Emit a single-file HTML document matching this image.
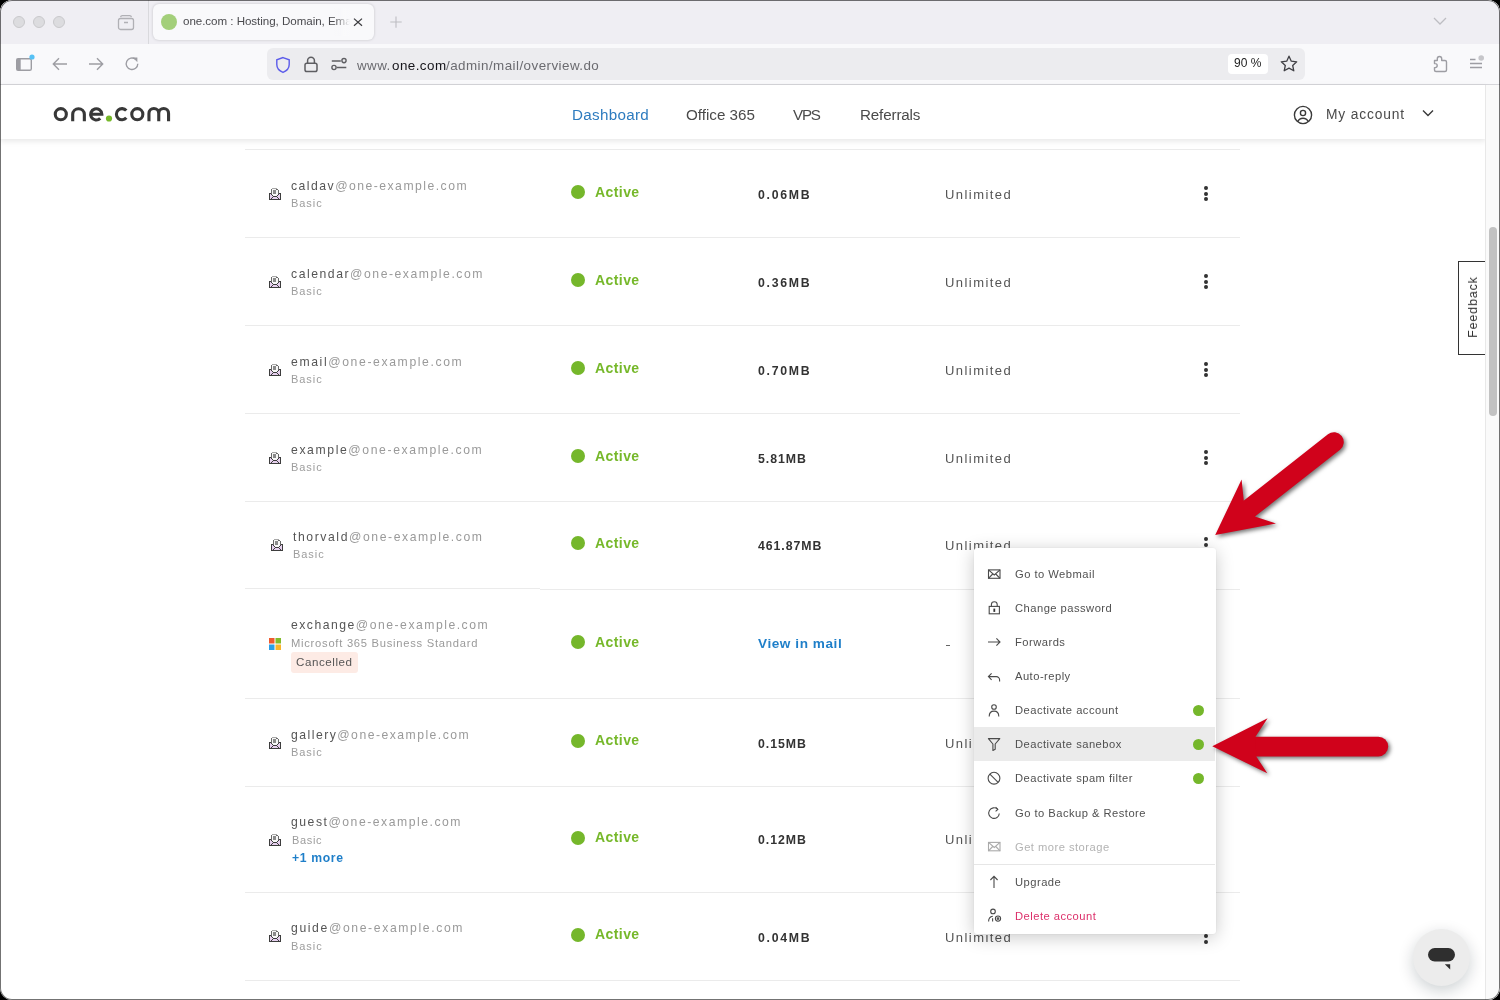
<!DOCTYPE html><html><head><meta charset="utf-8"><style>
*{margin:0;padding:0;box-sizing:border-box}
html,body{width:1500px;height:1000px;overflow:hidden;background:#000;font-family:"Liberation Sans",sans-serif}
.win{position:absolute;left:0;top:0;width:1500px;height:1000px;border-radius:12px;overflow:hidden;background:#fff}
.frame{position:absolute;left:0;top:0;width:1500px;height:1000px;border-radius:12px;box-shadow:inset 0 0 0 1px rgba(0,0,0,.55);z-index:50}
.t{position:absolute;white-space:pre;line-height:0;will-change:transform}
.abs{position:absolute}
.tabbar{position:absolute;left:0;top:0;width:1500px;height:44px;background:#efeef3}
.toolbar{position:absolute;left:0;top:44px;width:1500px;height:41px;background:#f9f9fb;border-bottom:1px solid #d6d6da}
.hdr{position:absolute;left:0;top:85px;width:1486px;height:54px;background:#fff;box-shadow:0 2px 6px rgba(0,0,0,.10);z-index:3}
.line{position:absolute;left:245px;width:995px;height:1px;background:#ebebeb}
.dot{position:absolute;width:14px;height:14px;border-radius:50%;background:#75b72b}
.kebab{position:absolute;width:3.8px;height:3.8px;border-radius:50%;background:#333}
.menu{position:absolute;left:974px;top:548px;width:242px;height:386px;background:#fff;border-radius:3px;box-shadow:0 3px 18px rgba(0,0,0,.22),0 0 2px rgba(0,0,0,.08);z-index:5}
.gdot{position:absolute;width:11px;height:11px;border-radius:50%;background:#75b72b}
</style></head><body><div class="win">
<div class="tabbar"></div>
<div class="abs" style="left:13px;top:16px;width:12px;height:12px;border-radius:50%;background:#dcdcdf;border:1px solid #c9c9cc"></div>
<div class="abs" style="left:33px;top:16px;width:12px;height:12px;border-radius:50%;background:#dcdcdf;border:1px solid #c9c9cc"></div>
<div class="abs" style="left:53px;top:16px;width:12px;height:12px;border-radius:50%;background:#dcdcdf;border:1px solid #c9c9cc"></div>
<svg class="abs" style="left:117px;top:13px" width="18" height="18" viewBox="0 0 18 18"><g fill="none" stroke="#b0b0b5" stroke-width="1.3"><rect x="1.5" y="5.5" width="15" height="11" rx="2"/><path d="M3.6 4.2a1.8 1.8 0 0 1 1.8-1.5h7.2a1.8 1.8 0 0 1 1.8 1.5"/><path d="M7 9.5h4"/></g></svg>
<div class="abs" style="left:148px;top:0;width:1px;height:44px;background:#d9d9dd"></div>
<div class="abs" style="left:153px;top:4px;width:221px;height:36px;background:#f9f9fb;border-radius:6px;box-shadow:0 0 3px rgba(0,0,0,.18)"></div>
<div class="abs" style="left:161px;top:14px;width:16px;height:16px;border-radius:50%;background:#a3cf7a"></div>
<div class="t" style="left:182.50px;top:21.18px;font-size:11.6px;font-weight:400;color:#4a4a4e;letter-spacing:-0.05px;">one.com : Hosting, Domain, Ema</div>
<div class="abs" style="left:334px;top:8px;width:20px;height:28px;background:linear-gradient(90deg,rgba(249,249,251,0),#f9f9fb 80%)"></div>
<svg class="abs" style="left:352px;top:16px" width="12" height="12" viewBox="0 0 12 12"><path d="M2 2.6l8 7.2M10 2.6l-8 7.2" stroke="#3d3d40" stroke-width="1.25"/></svg>
<svg class="abs" style="left:388px;top:14px" width="16" height="16" viewBox="0 0 16 16"><path d="M8 2.4v11.4M2.3 8h11.4" stroke="#bdbdc2" stroke-width="1.1"/></svg>
<svg class="abs" style="left:1432px;top:16px" width="16" height="10" viewBox="0 0 16 10"><path d="M2 2l6 6 6-6" fill="none" stroke="#bdbdc2" stroke-width="1.3"/></svg>
<div class="toolbar"></div>
<svg class="abs" style="left:14px;top:52px" width="24" height="22" viewBox="0 0 24 22"><rect x="2.7" y="6.7" width="14.6" height="11.6" rx="1.6" fill="none" stroke="#9d9da3" stroke-width="1.4"/><rect x="2.7" y="6.7" width="4" height="11.6" fill="#9d9da3"/><circle cx="18" cy="5" r="2.6" fill="#56c1f5"/></svg>
<svg class="abs" style="left:51px;top:55px" width="18" height="18" viewBox="0 0 18 18"><path d="M16 9H2.5M8 3.2L2.3 9 8 14.8" fill="none" stroke="#9d9da3" stroke-width="1.4"/></svg>
<svg class="abs" style="left:87px;top:55px" width="18" height="18" viewBox="0 0 18 18"><path d="M2 9h13.5M10 3.2L15.7 9 10 14.8" fill="none" stroke="#9d9da3" stroke-width="1.4"/></svg>
<svg class="abs" style="left:123px;top:55px" width="18" height="18" viewBox="0 0 18 18"><path d="M14.8 8.8A5.8 5.8 0 1 1 12.6 4.2" fill="none" stroke="#9d9da3" stroke-width="1.4"/><path d="M9.8 2.6h4.6v4.6z" fill="#9d9da3"/></svg>
<div class="abs" style="left:267px;top:48px;width:1038px;height:32px;background:#ececef;border-radius:6px"></div>
<svg class="abs" style="left:274px;top:56px" width="18" height="18" viewBox="0 0 18 18"><path d="M9 1.6L15.2 3.8V8.6C15.2 12.4 12.6 15 9 16.4 5.4 15 2.8 12.4 2.8 8.6V3.8z" fill="none" stroke="#5b5bea" stroke-width="1.4"/></svg>
<svg class="abs" style="left:302px;top:55px" width="18" height="18" viewBox="0 0 18 18"><g fill="none" stroke="#5e5e62" stroke-width="1.5"><rect x="3" y="8.2" width="12" height="8.3" rx="1.8"/><path d="M5.6 8.2V5.6a3.4 3.4 0 0 1 6.8 0v2.6"/></g></svg>
<svg class="abs" style="left:330px;top:56px" width="18" height="16" viewBox="0 0 18 16"><g fill="none" stroke="#5e5e62" stroke-width="1.4"><path d="M1.8 5h9M6.8 11.5h9.5"/><circle cx="14" cy="4.6" r="2.1"/><circle cx="4" cy="11.5" r="2.1"/></g></svg>
<div class="t" style="left:357.00px;top:65.75px;font-size:13.4px;font-weight:400;color:#6b6b70;letter-spacing:0.45px;">www.</div>
<div class="t" style="left:391.60px;top:65.75px;font-size:13.4px;font-weight:400;color:#15141a;letter-spacing:0.45px;">one.com</div>
<div class="t" style="left:445.50px;top:65.75px;font-size:13.4px;font-weight:400;color:#6b6b70;letter-spacing:0.45px;">/admin/mail/overview.do</div>
<div class="abs" style="left:1228px;top:54px;width:40px;height:20px;background:#fff;border-radius:4px"></div>
<div class="t" style="left:1234.30px;top:63.44px;font-size:12px;font-weight:400;color:#222;letter-spacing:0.05px;">90 %</div>
<svg class="abs" style="left:1279px;top:54px" width="20" height="20" viewBox="0 0 20 20"><path d="M10 2.2l2.3 5 5.4.6-4 3.7 1.1 5.3L10 14.1 5.2 16.8l1.1-5.3-4-3.7 5.4-.6z" fill="none" stroke="#3f3f44" stroke-width="1.3" stroke-linejoin="round"/></svg>
<svg class="abs" style="left:1432px;top:55px" width="16" height="18" viewBox="0 0 16 18"><path d="M2.5 5.5H5.3V3.7A2.2 2.2 0 0 1 9.7 3.7V5.5H13Q14.5 5.5 14.5 7V15Q14.5 16.5 13 16.5H4Q2.5 16.5 2.5 15V12.6H3.2A2 2 0 0 0 3.2 8.6H2.5Z" fill="none" stroke="#9d9da3" stroke-width="1.4" stroke-linejoin="round"/></svg>
<svg class="abs" style="left:1467px;top:53px" width="20" height="18" viewBox="0 0 20 18"><g stroke="#9d9da3" stroke-width="1.3"><path d="M3 6.5h5.5M3 10.5h12M3 14.5h12"/></g><circle cx="14.2" cy="5" r="2.8" fill="#c6c6ca"/></svg>
<div class="hdr">
</div>
<div style="position:absolute;left:0;top:0;z-index:4">
<svg class="abs" style="left:0;top:0" width="200" height="140" viewBox="0 0 200 140"><g fill="none" stroke="#383838" stroke-width="3.1">
<circle cx="60.8" cy="114.2" r="5.55"/>
<path d="M72.7 121.3V114.3A5.83 5.83 0 0 1 84.35 114.3V121.3"/>
<path d="M90.6 114.2H101.85A5.62 5.62 0 1 0 100.2 118.4"/>
<path d="M126.3 110.6A5.6 5.6 0 1 0 126.3 117.8"/>
<circle cx="137.3" cy="114.2" r="5.55"/>
<path d="M148.95 121.3V113.4A4.9 4.9 0 0 1 158.75 113.4V121.3M158.75 113.4A4.9 4.9 0 0 1 168.55 113.4V121.3"/>
</g><circle cx="109" cy="118.5" r="3.1" fill="#76b82a"/></svg>
<div class="t" style="left:571.70px;top:115.03px;font-size:15.2px;font-weight:400;color:#2d7bbf;letter-spacing:0.3px;">Dashboard</div>
<div class="t" style="left:685.70px;top:115.03px;font-size:15.2px;font-weight:400;color:#4a4a4a;letter-spacing:0.0px;">Office 365</div>
<div class="t" style="left:793.00px;top:115.03px;font-size:15.2px;font-weight:400;color:#4a4a4a;letter-spacing:-1.2px;">VPS</div>
<div class="t" style="left:859.50px;top:115.03px;font-size:15.2px;font-weight:400;color:#4a4a4a;letter-spacing:-0.15px;">Referrals</div>
<svg class="abs" style="left:1293px;top:105px" width="20" height="20" viewBox="0 0 20 20"><g fill="none" stroke="#3a3a3a" stroke-width="1.4"><circle cx="10" cy="10" r="8.6"/><circle cx="10" cy="8" r="2.6"/><path d="M4.6 16.6c1.2-2.4 3-3.4 5.4-3.4s4.2 1 5.4 3.4"/></g></svg>
<div class="t" style="left:1325.50px;top:114.92px;font-size:13.8px;font-weight:400;color:#4a4a4a;letter-spacing:0.85px;">My account</div>
<svg class="abs" style="left:1421px;top:108px" width="14" height="10" viewBox="0 0 14 10"><path d="M2 2.5l5 5 5-5" fill="none" stroke="#3a3a3a" stroke-width="1.4"/></svg>
</div>
<div class="line" style="top:149px"></div>
<div class="line" style="top:237px"></div>
<div class="line" style="top:325px"></div>
<div class="line" style="top:413px"></div>
<div class="line" style="top:501px"></div>
<div class="line" style="top:698px"></div>
<div class="line" style="top:786px"></div>
<div class="line" style="top:892px"></div>
<div class="line" style="top:980px"></div>
<div class="line" style="top:588px;width:295px"></div>
<div class="line" style="top:589px;left:540px;width:700px"></div>
<svg class="abs" style="left:269px;top:188px" width="12" height="12" viewBox="0 0 12 12" shape-rendering="crispEdges"><path d="M3 0h5v1h-5z" fill="#a8a8a8"/><path d="M2 1h1v1h-1zM7 1h2v1h-2zM2 2h1v1h-1zM9 2h1v1h-1zM2 3h1v1h-1zM9 3h1v1h-1zM2 4h1v1h-1zM9 4h1v1h-1zM2 5h1v1h-1zM9 5h1v1h-1z" fill="#6a6a6a"/><path d="M3 1h4v1h-4zM3 2h1v1h-1zM7 2h2v1h-2zM3 3h1v1h-1zM7 3h2v1h-2zM3 4h1v1h-1zM7 4h2v1h-2zM3 5h1v1h-1zM7 5h2v1h-2zM3 6h6v1h-6zM4 7h4v1h-4z" fill="#f7f7f7"/><path d="M4 2h3v1h-3zM4 3h3v1h-3zM4 4h3v1h-3zM4 5h3v1h-3z" fill="#8a8a8a"/><path d="M0 5h2v1h-2zM10 5h2v1h-2zM0 6h1v1h-1zM2 6h1v1h-1zM9 6h1v1h-1zM11 6h1v1h-1zM0 7h1v1h-1zM3 7h1v1h-1zM8 7h1v1h-1zM11 7h1v1h-1zM0 8h1v1h-1zM4 8h4v1h-4zM11 8h1v1h-1zM0 9h1v1h-1zM3 9h1v1h-1zM8 9h1v1h-1zM11 9h1v1h-1zM0 10h1v1h-1zM2 10h1v1h-1zM9 10h1v1h-1zM11 10h1v1h-1zM0 11h12v1h-12z" fill="#3d3d3d"/><path d="M1 6h1v1h-1zM10 6h1v1h-1zM1 7h2v1h-2zM9 7h2v1h-2zM1 8h3v1h-3zM8 8h3v1h-3zM1 9h2v1h-2zM4 9h4v1h-4zM9 9h2v1h-2zM1 10h1v1h-1zM3 10h6v1h-6zM10 10h1v1h-1z" fill="#e6d0ee"/></svg>
<div class="t" style="left:291.00px;top:185.77px;font-size:12.2px;font-weight:400;color:#555;letter-spacing:1.48px;">caldav<span style="color:#9a9a9a">@one-example.com</span></div>
<div class="t" style="left:290.50px;top:203.49px;font-size:11px;font-weight:400;color:#9d9d9d;letter-spacing:0.95px;">Basic</div>
<div class="dot" style="left:571px;top:185.0px"></div>
<div class="t" style="left:594.50px;top:191.55px;font-size:14px;font-weight:700;color:#76b82a;letter-spacing:0.42px;">Active</div>
<div class="t" style="left:758.40px;top:195.14px;font-size:12.3px;font-weight:700;color:#333;letter-spacing:1.7px;">0.06MB</div>
<div class="t" style="left:944.60px;top:195.39px;font-size:13px;font-weight:400;color:#555;letter-spacing:1.45px;">Unlimited</div>
<div class="kebab" style="left:1204.3px;top:186.3px"></div>
<div class="kebab" style="left:1204.3px;top:191.8px"></div>
<div class="kebab" style="left:1204.3px;top:197.3px"></div>
<svg class="abs" style="left:269px;top:276px" width="12" height="12" viewBox="0 0 12 12" shape-rendering="crispEdges"><path d="M3 0h5v1h-5z" fill="#a8a8a8"/><path d="M2 1h1v1h-1zM7 1h2v1h-2zM2 2h1v1h-1zM9 2h1v1h-1zM2 3h1v1h-1zM9 3h1v1h-1zM2 4h1v1h-1zM9 4h1v1h-1zM2 5h1v1h-1zM9 5h1v1h-1z" fill="#6a6a6a"/><path d="M3 1h4v1h-4zM3 2h1v1h-1zM7 2h2v1h-2zM3 3h1v1h-1zM7 3h2v1h-2zM3 4h1v1h-1zM7 4h2v1h-2zM3 5h1v1h-1zM7 5h2v1h-2zM3 6h6v1h-6zM4 7h4v1h-4z" fill="#f7f7f7"/><path d="M4 2h3v1h-3zM4 3h3v1h-3zM4 4h3v1h-3zM4 5h3v1h-3z" fill="#8a8a8a"/><path d="M0 5h2v1h-2zM10 5h2v1h-2zM0 6h1v1h-1zM2 6h1v1h-1zM9 6h1v1h-1zM11 6h1v1h-1zM0 7h1v1h-1zM3 7h1v1h-1zM8 7h1v1h-1zM11 7h1v1h-1zM0 8h1v1h-1zM4 8h4v1h-4zM11 8h1v1h-1zM0 9h1v1h-1zM3 9h1v1h-1zM8 9h1v1h-1zM11 9h1v1h-1zM0 10h1v1h-1zM2 10h1v1h-1zM9 10h1v1h-1zM11 10h1v1h-1zM0 11h12v1h-12z" fill="#3d3d3d"/><path d="M1 6h1v1h-1zM10 6h1v1h-1zM1 7h2v1h-2zM9 7h2v1h-2zM1 8h3v1h-3zM8 8h3v1h-3zM1 9h2v1h-2zM4 9h4v1h-4zM9 9h2v1h-2zM1 10h1v1h-1zM3 10h6v1h-6zM10 10h1v1h-1z" fill="#e6d0ee"/></svg>
<div class="t" style="left:291.00px;top:273.77px;font-size:12.2px;font-weight:400;color:#555;letter-spacing:1.54px;">calendar<span style="color:#9a9a9a">@one-example.com</span></div>
<div class="t" style="left:290.50px;top:291.49px;font-size:11px;font-weight:400;color:#9d9d9d;letter-spacing:0.95px;">Basic</div>
<div class="dot" style="left:571px;top:273.0px"></div>
<div class="t" style="left:594.50px;top:279.55px;font-size:14px;font-weight:700;color:#76b82a;letter-spacing:0.42px;">Active</div>
<div class="t" style="left:758.40px;top:283.14px;font-size:12.3px;font-weight:700;color:#333;letter-spacing:1.7px;">0.36MB</div>
<div class="t" style="left:944.60px;top:283.39px;font-size:13px;font-weight:400;color:#555;letter-spacing:1.45px;">Unlimited</div>
<div class="kebab" style="left:1204.3px;top:274.3px"></div>
<div class="kebab" style="left:1204.3px;top:279.8px"></div>
<div class="kebab" style="left:1204.3px;top:285.3px"></div>
<svg class="abs" style="left:269px;top:364px" width="12" height="12" viewBox="0 0 12 12" shape-rendering="crispEdges"><path d="M3 0h5v1h-5z" fill="#a8a8a8"/><path d="M2 1h1v1h-1zM7 1h2v1h-2zM2 2h1v1h-1zM9 2h1v1h-1zM2 3h1v1h-1zM9 3h1v1h-1zM2 4h1v1h-1zM9 4h1v1h-1zM2 5h1v1h-1zM9 5h1v1h-1z" fill="#6a6a6a"/><path d="M3 1h4v1h-4zM3 2h1v1h-1zM7 2h2v1h-2zM3 3h1v1h-1zM7 3h2v1h-2zM3 4h1v1h-1zM7 4h2v1h-2zM3 5h1v1h-1zM7 5h2v1h-2zM3 6h6v1h-6zM4 7h4v1h-4z" fill="#f7f7f7"/><path d="M4 2h3v1h-3zM4 3h3v1h-3zM4 4h3v1h-3zM4 5h3v1h-3z" fill="#8a8a8a"/><path d="M0 5h2v1h-2zM10 5h2v1h-2zM0 6h1v1h-1zM2 6h1v1h-1zM9 6h1v1h-1zM11 6h1v1h-1zM0 7h1v1h-1zM3 7h1v1h-1zM8 7h1v1h-1zM11 7h1v1h-1zM0 8h1v1h-1zM4 8h4v1h-4zM11 8h1v1h-1zM0 9h1v1h-1zM3 9h1v1h-1zM8 9h1v1h-1zM11 9h1v1h-1zM0 10h1v1h-1zM2 10h1v1h-1zM9 10h1v1h-1zM11 10h1v1h-1zM0 11h12v1h-12z" fill="#3d3d3d"/><path d="M1 6h1v1h-1zM10 6h1v1h-1zM1 7h2v1h-2zM9 7h2v1h-2zM1 8h3v1h-3zM8 8h3v1h-3zM1 9h2v1h-2zM4 9h4v1h-4zM9 9h2v1h-2zM1 10h1v1h-1zM3 10h6v1h-6zM10 10h1v1h-1z" fill="#e6d0ee"/></svg>
<div class="t" style="left:291.00px;top:361.77px;font-size:12.2px;font-weight:400;color:#555;letter-spacing:1.62px;">email<span style="color:#9a9a9a">@one-example.com</span></div>
<div class="t" style="left:290.50px;top:379.49px;font-size:11px;font-weight:400;color:#9d9d9d;letter-spacing:0.95px;">Basic</div>
<div class="dot" style="left:571px;top:361.0px"></div>
<div class="t" style="left:594.50px;top:367.55px;font-size:14px;font-weight:700;color:#76b82a;letter-spacing:0.42px;">Active</div>
<div class="t" style="left:758.40px;top:371.14px;font-size:12.3px;font-weight:700;color:#333;letter-spacing:1.7px;">0.70MB</div>
<div class="t" style="left:944.60px;top:371.39px;font-size:13px;font-weight:400;color:#555;letter-spacing:1.45px;">Unlimited</div>
<div class="kebab" style="left:1204.3px;top:362.3px"></div>
<div class="kebab" style="left:1204.3px;top:367.8px"></div>
<div class="kebab" style="left:1204.3px;top:373.3px"></div>
<svg class="abs" style="left:269px;top:452px" width="12" height="12" viewBox="0 0 12 12" shape-rendering="crispEdges"><path d="M3 0h5v1h-5z" fill="#a8a8a8"/><path d="M2 1h1v1h-1zM7 1h2v1h-2zM2 2h1v1h-1zM9 2h1v1h-1zM2 3h1v1h-1zM9 3h1v1h-1zM2 4h1v1h-1zM9 4h1v1h-1zM2 5h1v1h-1zM9 5h1v1h-1z" fill="#6a6a6a"/><path d="M3 1h4v1h-4zM3 2h1v1h-1zM7 2h2v1h-2zM3 3h1v1h-1zM7 3h2v1h-2zM3 4h1v1h-1zM7 4h2v1h-2zM3 5h1v1h-1zM7 5h2v1h-2zM3 6h6v1h-6zM4 7h4v1h-4z" fill="#f7f7f7"/><path d="M4 2h3v1h-3zM4 3h3v1h-3zM4 4h3v1h-3zM4 5h3v1h-3z" fill="#8a8a8a"/><path d="M0 5h2v1h-2zM10 5h2v1h-2zM0 6h1v1h-1zM2 6h1v1h-1zM9 6h1v1h-1zM11 6h1v1h-1zM0 7h1v1h-1zM3 7h1v1h-1zM8 7h1v1h-1zM11 7h1v1h-1zM0 8h1v1h-1zM4 8h4v1h-4zM11 8h1v1h-1zM0 9h1v1h-1zM3 9h1v1h-1zM8 9h1v1h-1zM11 9h1v1h-1zM0 10h1v1h-1zM2 10h1v1h-1zM9 10h1v1h-1zM11 10h1v1h-1zM0 11h12v1h-12z" fill="#3d3d3d"/><path d="M1 6h1v1h-1zM10 6h1v1h-1zM1 7h2v1h-2zM9 7h2v1h-2zM1 8h3v1h-3zM8 8h3v1h-3zM1 9h2v1h-2zM4 9h4v1h-4zM9 9h2v1h-2zM1 10h1v1h-1zM3 10h6v1h-6zM10 10h1v1h-1z" fill="#e6d0ee"/></svg>
<div class="t" style="left:291.00px;top:449.77px;font-size:12.2px;font-weight:400;color:#555;letter-spacing:1.61px;">example<span style="color:#9a9a9a">@one-example.com</span></div>
<div class="t" style="left:290.50px;top:467.49px;font-size:11px;font-weight:400;color:#9d9d9d;letter-spacing:0.95px;">Basic</div>
<div class="dot" style="left:571px;top:449.0px"></div>
<div class="t" style="left:594.50px;top:455.55px;font-size:14px;font-weight:700;color:#76b82a;letter-spacing:0.42px;">Active</div>
<div class="t" style="left:758.40px;top:459.14px;font-size:12.3px;font-weight:700;color:#333;letter-spacing:0.95px;">5.81MB</div>
<div class="t" style="left:944.60px;top:459.39px;font-size:13px;font-weight:400;color:#555;letter-spacing:1.45px;">Unlimited</div>
<div class="kebab" style="left:1204.3px;top:450.3px"></div>
<div class="kebab" style="left:1204.3px;top:455.8px"></div>
<div class="kebab" style="left:1204.3px;top:461.3px"></div>
<svg class="abs" style="left:271px;top:539px" width="12" height="12" viewBox="0 0 12 12" shape-rendering="crispEdges"><path d="M3 0h5v1h-5z" fill="#a8a8a8"/><path d="M2 1h1v1h-1zM7 1h2v1h-2zM2 2h1v1h-1zM9 2h1v1h-1zM2 3h1v1h-1zM9 3h1v1h-1zM2 4h1v1h-1zM9 4h1v1h-1zM2 5h1v1h-1zM9 5h1v1h-1z" fill="#6a6a6a"/><path d="M3 1h4v1h-4zM3 2h1v1h-1zM7 2h2v1h-2zM3 3h1v1h-1zM7 3h2v1h-2zM3 4h1v1h-1zM7 4h2v1h-2zM3 5h1v1h-1zM7 5h2v1h-2zM3 6h6v1h-6zM4 7h4v1h-4z" fill="#f7f7f7"/><path d="M4 2h3v1h-3zM4 3h3v1h-3zM4 4h3v1h-3zM4 5h3v1h-3z" fill="#8a8a8a"/><path d="M0 5h2v1h-2zM10 5h2v1h-2zM0 6h1v1h-1zM2 6h1v1h-1zM9 6h1v1h-1zM11 6h1v1h-1zM0 7h1v1h-1zM3 7h1v1h-1zM8 7h1v1h-1zM11 7h1v1h-1zM0 8h1v1h-1zM4 8h4v1h-4zM11 8h1v1h-1zM0 9h1v1h-1zM3 9h1v1h-1zM8 9h1v1h-1zM11 9h1v1h-1zM0 10h1v1h-1zM2 10h1v1h-1zM9 10h1v1h-1zM11 10h1v1h-1zM0 11h12v1h-12z" fill="#3d3d3d"/><path d="M1 6h1v1h-1zM10 6h1v1h-1zM1 7h2v1h-2zM9 7h2v1h-2zM1 8h3v1h-3zM8 8h3v1h-3zM1 9h2v1h-2zM4 9h4v1h-4zM9 9h2v1h-2zM1 10h1v1h-1zM3 10h6v1h-6zM10 10h1v1h-1z" fill="#e6d0ee"/></svg>
<div class="t" style="left:293.00px;top:536.77px;font-size:12.2px;font-weight:400;color:#555;letter-spacing:1.58px;">thorvald<span style="color:#9a9a9a">@one-example.com</span></div>
<div class="t" style="left:292.50px;top:554.49px;font-size:11px;font-weight:400;color:#9d9d9d;letter-spacing:0.95px;">Basic</div>
<div class="dot" style="left:571px;top:536.0px"></div>
<div class="t" style="left:594.50px;top:542.55px;font-size:14px;font-weight:700;color:#76b82a;letter-spacing:0.42px;">Active</div>
<div class="t" style="left:758.40px;top:546.14px;font-size:12.3px;font-weight:700;color:#333;letter-spacing:0.95px;">461.87MB</div>
<div class="t" style="left:944.60px;top:546.39px;font-size:13px;font-weight:400;color:#555;letter-spacing:1.45px;">Unlimited</div>
<div class="kebab" style="left:1204.3px;top:537.3px"></div>
<div class="kebab" style="left:1204.3px;top:542.8px"></div>
<div class="kebab" style="left:1204.3px;top:548.3px"></div>
<svg class="abs" style="left:269px;top:737px" width="12" height="12" viewBox="0 0 12 12" shape-rendering="crispEdges"><path d="M3 0h5v1h-5z" fill="#a8a8a8"/><path d="M2 1h1v1h-1zM7 1h2v1h-2zM2 2h1v1h-1zM9 2h1v1h-1zM2 3h1v1h-1zM9 3h1v1h-1zM2 4h1v1h-1zM9 4h1v1h-1zM2 5h1v1h-1zM9 5h1v1h-1z" fill="#6a6a6a"/><path d="M3 1h4v1h-4zM3 2h1v1h-1zM7 2h2v1h-2zM3 3h1v1h-1zM7 3h2v1h-2zM3 4h1v1h-1zM7 4h2v1h-2zM3 5h1v1h-1zM7 5h2v1h-2zM3 6h6v1h-6zM4 7h4v1h-4z" fill="#f7f7f7"/><path d="M4 2h3v1h-3zM4 3h3v1h-3zM4 4h3v1h-3zM4 5h3v1h-3z" fill="#8a8a8a"/><path d="M0 5h2v1h-2zM10 5h2v1h-2zM0 6h1v1h-1zM2 6h1v1h-1zM9 6h1v1h-1zM11 6h1v1h-1zM0 7h1v1h-1zM3 7h1v1h-1zM8 7h1v1h-1zM11 7h1v1h-1zM0 8h1v1h-1zM4 8h4v1h-4zM11 8h1v1h-1zM0 9h1v1h-1zM3 9h1v1h-1zM8 9h1v1h-1zM11 9h1v1h-1zM0 10h1v1h-1zM2 10h1v1h-1zM9 10h1v1h-1zM11 10h1v1h-1zM0 11h12v1h-12z" fill="#3d3d3d"/><path d="M1 6h1v1h-1zM10 6h1v1h-1zM1 7h2v1h-2zM9 7h2v1h-2zM1 8h3v1h-3zM8 8h3v1h-3zM1 9h2v1h-2zM4 9h4v1h-4zM9 9h2v1h-2zM1 10h1v1h-1zM3 10h6v1h-6zM10 10h1v1h-1z" fill="#e6d0ee"/></svg>
<div class="t" style="left:291.00px;top:734.57px;font-size:12.2px;font-weight:400;color:#555;letter-spacing:1.48px;">gallery<span style="color:#9a9a9a">@one-example.com</span></div>
<div class="t" style="left:290.50px;top:752.29px;font-size:11px;font-weight:400;color:#9d9d9d;letter-spacing:0.95px;">Basic</div>
<div class="dot" style="left:571px;top:733.8px"></div>
<div class="t" style="left:594.50px;top:740.35px;font-size:14px;font-weight:700;color:#76b82a;letter-spacing:0.42px;">Active</div>
<div class="t" style="left:758.40px;top:743.94px;font-size:12.3px;font-weight:700;color:#333;letter-spacing:0.95px;">0.15MB</div>
<div class="t" style="left:944.60px;top:744.19px;font-size:13px;font-weight:400;color:#555;letter-spacing:1.45px;">Unlimited</div>
<div class="kebab" style="left:1204.3px;top:735.1px"></div>
<div class="kebab" style="left:1204.3px;top:740.6px"></div>
<div class="kebab" style="left:1204.3px;top:746.1px"></div>
<svg class="abs" style="left:269px;top:930px" width="12" height="12" viewBox="0 0 12 12" shape-rendering="crispEdges"><path d="M3 0h5v1h-5z" fill="#a8a8a8"/><path d="M2 1h1v1h-1zM7 1h2v1h-2zM2 2h1v1h-1zM9 2h1v1h-1zM2 3h1v1h-1zM9 3h1v1h-1zM2 4h1v1h-1zM9 4h1v1h-1zM2 5h1v1h-1zM9 5h1v1h-1z" fill="#6a6a6a"/><path d="M3 1h4v1h-4zM3 2h1v1h-1zM7 2h2v1h-2zM3 3h1v1h-1zM7 3h2v1h-2zM3 4h1v1h-1zM7 4h2v1h-2zM3 5h1v1h-1zM7 5h2v1h-2zM3 6h6v1h-6zM4 7h4v1h-4z" fill="#f7f7f7"/><path d="M4 2h3v1h-3zM4 3h3v1h-3zM4 4h3v1h-3zM4 5h3v1h-3z" fill="#8a8a8a"/><path d="M0 5h2v1h-2zM10 5h2v1h-2zM0 6h1v1h-1zM2 6h1v1h-1zM9 6h1v1h-1zM11 6h1v1h-1zM0 7h1v1h-1zM3 7h1v1h-1zM8 7h1v1h-1zM11 7h1v1h-1zM0 8h1v1h-1zM4 8h4v1h-4zM11 8h1v1h-1zM0 9h1v1h-1zM3 9h1v1h-1zM8 9h1v1h-1zM11 9h1v1h-1zM0 10h1v1h-1zM2 10h1v1h-1zM9 10h1v1h-1zM11 10h1v1h-1zM0 11h12v1h-12z" fill="#3d3d3d"/><path d="M1 6h1v1h-1zM10 6h1v1h-1zM1 7h2v1h-2zM9 7h2v1h-2zM1 8h3v1h-3zM8 8h3v1h-3zM1 9h2v1h-2zM4 9h4v1h-4zM9 9h2v1h-2zM1 10h1v1h-1zM3 10h6v1h-6zM10 10h1v1h-1z" fill="#e6d0ee"/></svg>
<div class="t" style="left:291.00px;top:928.27px;font-size:12.2px;font-weight:400;color:#555;letter-spacing:1.62px;">guide<span style="color:#9a9a9a">@one-example.com</span></div>
<div class="t" style="left:290.50px;top:945.99px;font-size:11px;font-weight:400;color:#9d9d9d;letter-spacing:0.95px;">Basic</div>
<div class="dot" style="left:571px;top:927.5px"></div>
<div class="t" style="left:594.50px;top:934.05px;font-size:14px;font-weight:700;color:#76b82a;letter-spacing:0.42px;">Active</div>
<div class="t" style="left:758.40px;top:937.64px;font-size:12.3px;font-weight:700;color:#333;letter-spacing:1.7px;">0.04MB</div>
<div class="t" style="left:944.60px;top:937.89px;font-size:13px;font-weight:400;color:#555;letter-spacing:1.45px;">Unlimited</div>
<div class="kebab" style="left:1204.3px;top:928.8px"></div>
<div class="kebab" style="left:1204.3px;top:934.3px"></div>
<div class="kebab" style="left:1204.3px;top:939.8px"></div>
<svg class="abs" style="left:269px;top:638px" width="12" height="12" viewBox="0 0 12 12"><rect x="0" y="0" width="5.5" height="5.5" fill="#ee5a2f"/><rect x="6.5" y="0" width="5.5" height="5.5" fill="#82bb2b"/><rect x="0" y="6.5" width="5.5" height="5.5" fill="#2a9fe8"/><rect x="6.5" y="6.5" width="5.5" height="5.5" fill="#f8b52c"/></svg>
<div class="t" style="left:290.80px;top:624.87px;font-size:12.2px;font-weight:400;color:#555;letter-spacing:1.5px;">exchange<span style="color:#9a9a9a">@one-example.com</span></div>
<div class="t" style="left:290.70px;top:643.22px;font-size:11.2px;font-weight:400;color:#9a9a9a;letter-spacing:0.74px;">Microsoft 365 Business Standard</div>
<div class="abs" style="left:291px;top:652px;width:67px;height:21px;background:#fdebe5;border-radius:3px"></div>
<div class="t" style="left:296.40px;top:662.18px;font-size:11.6px;font-weight:400;color:#555;letter-spacing:0.55px;">Cancelled</div>
<div class="dot" style="left:571px;top:635px"></div>
<div class="t" style="left:594.50px;top:642.05px;font-size:14px;font-weight:700;color:#76b82a;letter-spacing:0.42px;">Active</div>
<div class="t" style="left:758.40px;top:644.28px;font-size:13.6px;font-weight:700;color:#1f7fc9;letter-spacing:0.56px;">View in mail</div>
<div class="abs" style="left:946px;top:644.5px;width:4px;height:1.3px;background:#666"></div>
<svg class="abs" style="left:269px;top:834px" width="12" height="12" viewBox="0 0 12 12" shape-rendering="crispEdges"><path d="M3 0h5v1h-5z" fill="#a8a8a8"/><path d="M2 1h1v1h-1zM7 1h2v1h-2zM2 2h1v1h-1zM9 2h1v1h-1zM2 3h1v1h-1zM9 3h1v1h-1zM2 4h1v1h-1zM9 4h1v1h-1zM2 5h1v1h-1zM9 5h1v1h-1z" fill="#6a6a6a"/><path d="M3 1h4v1h-4zM3 2h1v1h-1zM7 2h2v1h-2zM3 3h1v1h-1zM7 3h2v1h-2zM3 4h1v1h-1zM7 4h2v1h-2zM3 5h1v1h-1zM7 5h2v1h-2zM3 6h6v1h-6zM4 7h4v1h-4z" fill="#f7f7f7"/><path d="M4 2h3v1h-3zM4 3h3v1h-3zM4 4h3v1h-3zM4 5h3v1h-3z" fill="#8a8a8a"/><path d="M0 5h2v1h-2zM10 5h2v1h-2zM0 6h1v1h-1zM2 6h1v1h-1zM9 6h1v1h-1zM11 6h1v1h-1zM0 7h1v1h-1zM3 7h1v1h-1zM8 7h1v1h-1zM11 7h1v1h-1zM0 8h1v1h-1zM4 8h4v1h-4zM11 8h1v1h-1zM0 9h1v1h-1zM3 9h1v1h-1zM8 9h1v1h-1zM11 9h1v1h-1zM0 10h1v1h-1zM2 10h1v1h-1zM9 10h1v1h-1zM11 10h1v1h-1zM0 11h12v1h-12z" fill="#3d3d3d"/><path d="M1 6h1v1h-1zM10 6h1v1h-1zM1 7h2v1h-2zM9 7h2v1h-2zM1 8h3v1h-3zM8 8h3v1h-3zM1 9h2v1h-2zM4 9h4v1h-4zM9 9h2v1h-2zM1 10h1v1h-1zM3 10h6v1h-6zM10 10h1v1h-1z" fill="#e6d0ee"/></svg>
<div class="t" style="left:291.00px;top:821.77px;font-size:12.2px;font-weight:400;color:#555;letter-spacing:1.52px;">guest<span style="color:#9a9a9a">@one-example.com</span></div>
<div class="t" style="left:291.50px;top:840.19px;font-size:11px;font-weight:400;color:#9d9d9d;letter-spacing:0.68px;">Basic</div>
<div class="t" style="left:292.00px;top:857.67px;font-size:12.2px;font-weight:700;color:#1f7fc9;letter-spacing:0.65px;">+1 more</div>
<div class="dot" style="left:571px;top:831px"></div>
<div class="t" style="left:594.50px;top:837.15px;font-size:14px;font-weight:700;color:#76b82a;letter-spacing:0.42px;">Active</div>
<div class="t" style="left:758.40px;top:840.24px;font-size:12.3px;font-weight:700;color:#333;letter-spacing:0.95px;">0.12MB</div>
<div class="t" style="left:944.60px;top:839.89px;font-size:13px;font-weight:400;color:#555;letter-spacing:1.45px;">Unlimited</div>
<div class="menu"></div>
<div class="abs" style="left:974px;top:727px;width:241px;height:34px;background:#ebebeb;z-index:6"></div>
<div class="abs" style="left:974px;top:864px;width:241px;height:1px;background:#e6e6e6;z-index:6"></div>
<div style="position:absolute;left:0;top:0;z-index:7">
<div class="t" style="left:1015.00px;top:573.97px;font-size:11.2px;font-weight:400;color:#505050;letter-spacing:0.47px;">Go to Webmail</div>
<div class="t" style="left:1015.00px;top:607.97px;font-size:11.2px;font-weight:400;color:#505050;letter-spacing:0.47px;">Change password</div>
<div class="t" style="left:1015.00px;top:641.97px;font-size:11.2px;font-weight:400;color:#505050;letter-spacing:0.47px;">Forwards</div>
<div class="t" style="left:1015.00px;top:675.97px;font-size:11.2px;font-weight:400;color:#505050;letter-spacing:0.47px;">Auto-reply</div>
<div class="t" style="left:1015.00px;top:709.97px;font-size:11.2px;font-weight:400;color:#505050;letter-spacing:0.47px;">Deactivate account</div>
<div class="gdot" style="left:1193px;top:704.5px"></div>
<div class="t" style="left:1015.00px;top:743.97px;font-size:11.2px;font-weight:400;color:#505050;letter-spacing:0.47px;">Deactivate sanebox</div>
<div class="gdot" style="left:1193px;top:738.5px"></div>
<div class="t" style="left:1015.00px;top:777.97px;font-size:11.2px;font-weight:400;color:#505050;letter-spacing:0.47px;">Deactivate spam filter</div>
<div class="gdot" style="left:1193px;top:772.5px"></div>
<div class="t" style="left:1015.00px;top:813.47px;font-size:11.2px;font-weight:400;color:#505050;letter-spacing:0.47px;">Go to Backup &amp; Restore</div>
<div class="t" style="left:1015.00px;top:847.27px;font-size:11.2px;font-weight:400;color:#b3b3b3;letter-spacing:0.47px;">Get more storage</div>
<div class="t" style="left:1015.00px;top:881.97px;font-size:11.2px;font-weight:400;color:#505050;letter-spacing:0.47px;">Upgrade</div>
<div class="t" style="left:1015.00px;top:915.97px;font-size:11.2px;font-weight:400;color:#dc2f6a;letter-spacing:0.47px;">Delete account</div>
<svg class="abs" style="left:986px;top:567px" width="16" height="14" viewBox="0 0 16 14"><g fill="none" stroke="#4a4a4a" stroke-width="1.1"><rect x="2.5" y="2.9" width="11.5" height="8.4"/><path d="M2.5 2.9l5.75 5 5.75-5M2.5 11.3l4.2-4.3M14 11.3l-4.2-4.3"/></g></svg>
<svg class="abs" style="left:986px;top:600px" width="16" height="16" viewBox="0 0 16 16"><g fill="none" stroke="#4a4a4a" stroke-width="1.1"><rect x="3.2" y="6.4" width="10.2" height="7.4"/><path d="M5.4 6.4V4.6a2.9 2.9 0 0 1 5.8 0v1.8"/></g><path d="M8.3 8.6v3.3" stroke="#333" stroke-width="1.8"/></svg>
<svg class="abs" style="left:986px;top:634px" width="16" height="16" viewBox="0 0 16 16"><g fill="none" stroke="#4a4a4a" stroke-width="1.1"><path d="M2 8h12M10.4 4.4L14 8l-3.6 3.6"/></g></svg>
<svg class="abs" style="left:986px;top:668px" width="16" height="16" viewBox="0 0 16 16"><g fill="none" stroke="#4a4a4a" stroke-width="1.1"><path d="M2.4 8.6h8a3.2 3.2 0 0 1 3.2 3.2v1.6M5.6 5.4L2.4 8.6l3.2 3.2"/></g></svg>
<svg class="abs" style="left:986px;top:702px" width="16" height="16" viewBox="0 0 16 16"><g fill="none" stroke="#4a4a4a" stroke-width="1.1"><circle cx="8" cy="5" r="2.3"/><path d="M3.2 14.4c0-3.2 2-5.3 4.8-5.3s4.8 2.1 4.8 5.3"/></g></svg>
<svg class="abs" style="left:986px;top:736px" width="16" height="16" viewBox="0 0 16 16"><g fill="none" stroke="#4a4a4a" stroke-width="1.1" stroke-linejoin="round"><path d="M2.4 2.6h11.4L9.2 8v5.2L6.9 14.4V8z"/></g></svg>
<svg class="abs" style="left:986px;top:770px" width="16" height="16" viewBox="0 0 16 16"><g fill="none" stroke="#4a4a4a" stroke-width="1.1"><circle cx="8" cy="8.2" r="5.9"/><path d="M3.9 4.1l8.2 8.2"/></g></svg>
<svg class="abs" style="left:986px;top:805px" width="16" height="16" viewBox="0 0 16 16"><g fill="none" stroke="#4a4a4a" stroke-width="1.1"><path d="M11.6 4.2A5.3 5.3 0 1 0 13.3 8.5"/><path d="M9.6 2.2l2.2 2.2-2.2 1.9"/></g></svg>
<svg class="abs" style="left:986px;top:839px" width="16" height="14" viewBox="0 0 16 14"><g fill="none" stroke="#aaaaaa" stroke-width="1.1"><rect x="2.5" y="3.4" width="11.5" height="8.4"/><path d="M2.5 3.4l5.75 5 5.75-5M2.5 11.8l4.2-4.3M14 11.8l-4.2-4.3"/></g></svg>
<svg class="abs" style="left:986px;top:874px" width="16" height="16" viewBox="0 0 16 16"><g fill="none" stroke="#4a4a4a" stroke-width="1.1"><path d="M8 14V2.4M4.4 6L8 2.4 11.6 6"/></g></svg>
<svg class="abs" style="left:986px;top:907px" width="16" height="17" viewBox="0 0 16 17"><g fill="none" stroke="#4a4a4a" stroke-width="1.1"><circle cx="7" cy="4.4" r="2.3"/><path d="M2.6 14.6c0-3 1.6-5 4.2-5.3M6.6 11.2v3.4"/><circle cx="12" cy="11.6" r="2.6"/><circle cx="12" cy="11.6" r="0.8"/></g></svg>
</div>
<svg class="abs" style="left:0;top:0;z-index:9;filter:drop-shadow(2px 2px 2px rgba(0,0,0,.55))" width="1500" height="1000" viewBox="0 0 1500 1000">
<g fill="#d0021b" stroke="none">
<path d="M1334 442L1249.6 508.4" stroke="#d0021b" stroke-width="19.5" stroke-linecap="round"/>
<path d="M1215.2 535.1L1241.6 479.4L1243.8 500.7L1255.5 516.8L1276 523.4z"/>
<path d="M1378.3 746.6L1255 746.6" stroke="#d0021b" stroke-width="19.8" stroke-linecap="round"/>
<path d="M1212.3 746.2L1267.6 718.3L1255.5 736.7L1256.3 756.5L1267.3 773.3z"/>
</g></svg>
<div class="abs" style="left:1458px;top:261px;width:29px;height:94px;background:#fff;border:1px solid #333;border-right:none;z-index:4"></div>
<div class="t" style="left:1472.5px;top:307px;font-size:12.5px;color:#333;letter-spacing:0.85px;transform:translate(-50%,0) rotate(-90deg);transform-origin:50% 0;z-index:4">Feedback</div>
<div class="abs" style="left:1485px;top:85px;width:15px;height:915px;background:#fafafa;border-left:1px solid #e8e8e8;z-index:4"></div>
<div class="abs" style="left:1489px;top:227px;width:8px;height:189px;background:#c2c2c2;border-radius:4px;z-index:4"></div>
<div class="abs" style="left:1413px;top:928.5px;width:57px;height:57px;border-radius:50%;background:#ececec;box-shadow:0 5px 16px rgba(0,25,35,.2);z-index:4"></div>
<svg class="abs" style="left:1425px;top:945px;z-index:4" width="34" height="28" viewBox="0 0 34 28"><rect x="3" y="3" width="27" height="13.5" rx="6.75" fill="#2f2f2f"/><path d="M19.8 19.2h5.4v5.2z" fill="#2f2f2f"/></svg>
<div class="frame"></div></div></body></html>
